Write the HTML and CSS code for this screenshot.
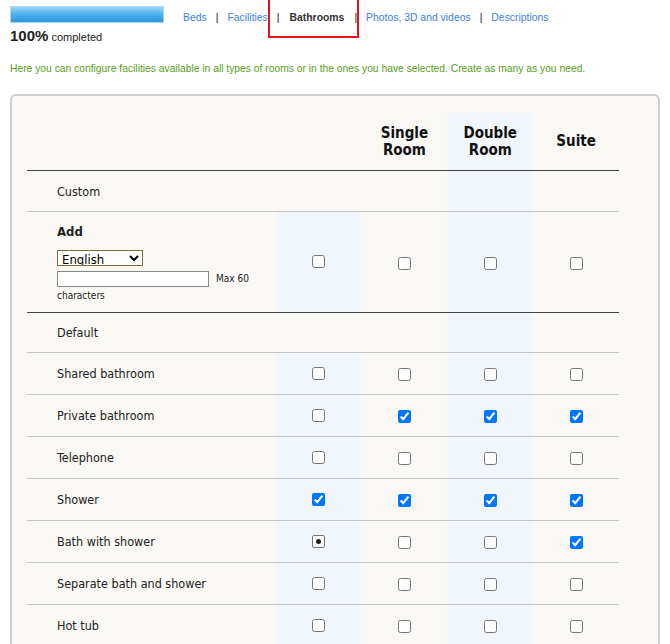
FILE: index.html
```html
<!DOCTYPE html>
<html lang="en">
<head>
    <meta charset="UTF-8">
    <title>Bathrooms</title>
    <link rel="stylesheet" href="styles.css">
</head>
<body>

    <div class="top">
        <div class="progress">
            <div class="bar"></div>
            <p class="done"><b>100%</b> completed</p>
        </div>
        <ul class="steps">
            <li><a href="#">Beds</a></li>
            <li class="sep">|</li>
            <li><a href="#">Facilities</a></li>
            <li class="sep">|</li>
            <li class="current">Bathrooms</li>
            <li class="sep">|</li>
            <li><a href="#">Photos, 3D and videos</a></li>
            <li class="sep">|</li>
            <li><a href="#">Descriptions</a></li>
        </ul>
    </div>

    <p class="hint">Here you can configure facilities available in all types of rooms or in the ones you have selected. Create as many as you need.</p>

    <div class="box">
        <table class="grid">
            <colgroup>
                <col class="c-label"><col class="c-all"><col class="c-room"><col class="c-room alt"><col class="c-room">
            </colgroup>
            <tr class="head">
                <th></th>
                <th></th>
                <th>Single<br>Room</th>
                <th class="blue">Double<br>Room</th>
                <th>Suite</th>
            </tr>
            <tr class="section custom">
                <td>Custom</td><td></td><td></td><td class="blue"></td><td></td>
            </tr>
            <tr class="add end">
                <td>
                    <b class="add-title">Add</b>
                    <select class="lang"><option>English</option></select>
                    <div class="newname"><input type="text"> <small>Max 60</small></div>
                    <small class="chars">characters</small>
                </td>
                <td class="blue all"><input type="checkbox"></td>
                <td><input type="checkbox"></td>
                <td class="blue"><input type="checkbox"></td>
                <td><input type="checkbox"></td>
            </tr>
            <tr class="section">
                <td>Default</td><td></td><td></td><td class="blue"></td><td></td>
            </tr>
            <tr>
                <td>Shared bathroom</td>
                <td class="blue all"><input type="checkbox"></td>
                <td><input type="checkbox"></td>
                <td class="blue"><input type="checkbox"></td>
                <td><input type="checkbox"></td>
            </tr>
            <tr>
                <td>Private bathroom</td>
                <td class="blue all"><input type="checkbox"></td>
                <td><input type="checkbox" checked></td>
                <td class="blue"><input type="checkbox" checked></td>
                <td><input type="checkbox" checked></td>
            </tr>
            <tr>
                <td>Telephone</td>
                <td class="blue all"><input type="checkbox"></td>
                <td><input type="checkbox"></td>
                <td class="blue"><input type="checkbox"></td>
                <td><input type="checkbox"></td>
            </tr>
            <tr>
                <td>Shower</td>
                <td class="blue all"><input type="checkbox" checked></td>
                <td><input type="checkbox" checked></td>
                <td class="blue"><input type="checkbox" checked></td>
                <td><input type="checkbox" checked></td>
            </tr>
            <tr>
                <td>Bath with shower</td>
                <td class="blue all"><span class="partial"></span></td>
                <td><input type="checkbox"></td>
                <td class="blue"><input type="checkbox"></td>
                <td><input type="checkbox" checked></td>
            </tr>
            <tr>
                <td>Separate bath and shower</td>
                <td class="blue all"><input type="checkbox"></td>
                <td><input type="checkbox"></td>
                <td class="blue"><input type="checkbox"></td>
                <td><input type="checkbox"></td>
            </tr>
            <tr>
                <td>Hot tub</td>
                <td class="blue all"><input type="checkbox"></td>
                <td><input type="checkbox"></td>
                <td class="blue"><input type="checkbox"></td>
                <td><input type="checkbox"></td>
            </tr>
        </table>
    </div>

</body>
</html>
```

FILE: styles.css
```css
body { margin: 0; padding: 6px 10px 0; background: #fff; font-family: 'Liberation Sans', Arial, sans-serif; color: #222; }

.top { display: flex; align-items: flex-start; }
.progress { width: 173px; }
.bar { width: 152px; height: 15px; border: 1px solid #a9d8f3; background: linear-gradient(#9ad7f7, #52b3ec 45%, #2a95dc); }
.done { margin: 4px 0 0; font-size: 11px; }
.done b { font-size: 15px; }

.steps { list-style: none; margin: 6px 0 0; padding: 0; display: flex; gap: 9px; font-size: 10.4px; }
.steps a { color: #3b7fe0; text-decoration: none; }
.steps .sep { color: #111; }
.steps .current { position: relative; color: #333; font-weight: bold; padding: 0 1px; }
.steps .current::after { content: ""; position: absolute; left: -21px; right: -14px; top: -21px; bottom: -15px; border: 2px solid #e8141b; }

.hint { margin: 19px 0 0; font-size: 10.3px; color: #55a01b; }

.box { margin-top: 20px; border: 2px solid #cfcfcf; border-radius: 6px; background: #f9f8f4; padding: 17px 15px 40px; }

.grid { width: 592px; border-collapse: collapse; font-family: 'DejaVu Sans Condensed', 'DejaVu Sans', sans-serif; font-size: 12.5px; color: #222; }
.c-label { width: 249px; }
.c-all, .c-room { width: 86px; }
.grid td { height: 41px; padding: 0; border-bottom: 1px solid #c8c8c8; text-align: center; vertical-align: middle; }
.grid td:first-child { text-align: left; padding-left: 30px; }
.grid tr.section td { height: 39px; }
.grid tr.custom td { height: 40px; }
.grid .blue { background: #f1f6fd; }
.grid th { height: 57px; font-size: 15px; line-height: 17px; font-weight: bold; color: #111; border-bottom: 1px solid #444; vertical-align: middle; padding: 0; }
.grid tr.end td { border-bottom: 1px solid #444; }
.grid tr.add td { height: 100px; }

.grid input[type=checkbox] { width: 13px; height: 13px; margin: 1px 0 0; vertical-align: middle; }
.grid td.all input, .grid td.all .partial { margin-top: -3px; }

.partial { display: inline-block; width: 11px; height: 11px; border: 1px solid #767676; border-radius: 2px; background: #fff; position: relative; vertical-align: middle; }
.partial::after { content: ""; position: absolute; left: 3px; top: 3px; width: 5px; height: 5px; border-radius: 50%; background: #222; }

.add-title { display: block; font-size: 13px; margin-bottom: 11px; }
.lang { display: block; width: 86px; height: 16px; padding: 0; font-family: 'DejaVu Sans Condensed', 'DejaVu Sans', sans-serif; font-size: 13px; border: 1px solid #7a6f3a; background: #fff; margin-bottom: 5px; }
.newname { display: flex; align-items: center; gap: 7px; }
.newname input { width: 148px; height: 12px; padding: 1px; border: 1px solid #888; margin: 0; }
.grid small { font-size: 10px; }
.chars { display: block; margin-top: 3px; }
```
